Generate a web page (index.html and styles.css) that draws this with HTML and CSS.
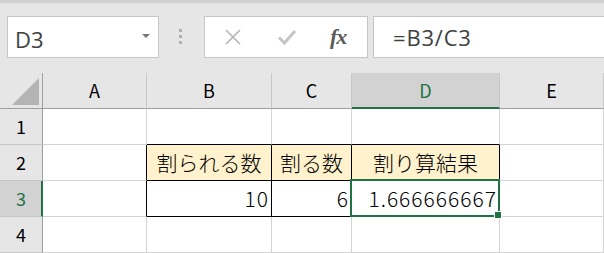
FILE: index.html
```html
<!doctype html>
<html>
<head>
	<meta charset="utf-8">
	<title>割り算</title>
	<link rel="stylesheet" href="styles.css">
</head>

<body>
	<div class="toolbar">
		<div class="namebox">
			<span class="name">D3</span>
			<span class="drop"></span>
		</div>
		<div class="grip"><i></i><i></i><i></i></div>
		<div class="buttons">
			<svg class="btn" width="20" height="16" viewBox="0 0 20 16">
				<path d="M3 1 L17 15 M17 1 L3 15" stroke="#b4b4b4" stroke-width="1.6" fill="none"/>
			</svg>
			<svg class="btn" width="20" height="16" viewBox="0 0 20 16">
				<path d="M2 8.5 L7.5 14 L18 2" stroke="#c4c4c4" stroke-width="3" fill="none"/>
			</svg>
			<span class="fx">fx</span>
		</div>
		<div class="formula">=B3/C3</div>
	</div>

	<div class="sheet">
		<div class="corner"><span class="tri"></span></div>
		<div class="colhead">A</div>
		<div class="colhead">B</div>
		<div class="colhead">C</div>
		<div class="colhead active">D</div>
		<div class="colhead">E</div>

		<div class="rowhead">1</div>
		<div class="cell"></div>
		<div class="cell bb"></div>
		<div class="cell bb"></div>
		<div class="cell bb"></div>
		<div class="cell"></div>

		<div class="rowhead">2</div>
		<div class="cell br"></div>
		<div class="cell box head">割られる数</div>
		<div class="cell box head">割る数</div>
		<div class="cell box head">割り算結果</div>
		<div class="cell"></div>

		<div class="rowhead active">3</div>
		<div class="cell br"></div>
		<div class="cell box num">10</div>
		<div class="cell box num">6</div>
		<div class="cell box num selected">1.666666667<span class="frame"></span><span class="handle"></span></div>
		<div class="cell"></div>

		<div class="rowhead">4</div>
		<div class="cell"></div>
		<div class="cell"></div>
		<div class="cell"></div>
		<div class="cell"></div>
		<div class="cell"></div>
	</div>
</body>
</html>
```

FILE: styles.css
```css
html, body {
	margin: 0;
	padding: 0;
}
body {
	width: 604px;
	height: 253px;
	overflow: hidden;
	background: #e6e6e6;
	font-family: "Noto Sans CJK JP", "Noto Sans", sans-serif;
}

/* formula bar */
.toolbar {
	display: flex;
	align-items: flex-start;
	height: 73px;
	box-sizing: border-box;
	padding: 16px 0 0 7px;
	background: linear-gradient(#d0d0d0 0, #d0d0d0 2px, #e6e6e6 4px);
}
.toolbar > * {
	flex-shrink: 0;
}
.namebox {
	display: flex;
	align-items: center;
	justify-content: space-between;
	width: 152px;
	height: 42px;
	box-sizing: border-box;
	border: 1px solid #c6c6c6;
	background: #fff;
	padding: 0 8px 0 7px;
}
.name {
	font-family: "Open Sans", "Liberation Sans", sans-serif;
	font-size: 22px;
	color: #404040;
	padding-top: 3px;
}
.drop {
	width: 0;
	height: 0;
	border-left: 4px solid transparent;
	border-right: 4px solid transparent;
	border-top: 4px solid #777;
	margin-top: -3px;
}
.grip {
	display: flex;
	flex-direction: column;
	gap: 3px;
	margin: 13px 0 0 20px;
}
.grip i {
	display: block;
	width: 3px;
	height: 3px;
	background: #b0b0b0;
}
.buttons {
	display: flex;
	align-items: center;
	width: 164px;
	height: 42px;
	box-sizing: border-box;
	margin-left: 22px;
	border: 1px solid #c6c6c6;
	background: #fff;
	padding-left: 18px;
}
.btn {
	margin-right: 34px;
}
.buttons .btn + .btn {
	margin-right: 33px;
}
.fx {
	font-family: "Liberation Serif", "DejaVu Serif", serif;
	font-style: italic;
	font-weight: bold;
	font-size: 22px;
	color: #5a5a5a;
	letter-spacing: -1px;
}
.formula {
	width: 260px;
	height: 42px;
	box-sizing: border-box;
	margin-left: 5px;
	border: 1px solid #c6c6c6;
	border-right: none;
	background: #fff;
	padding: 5px 0 0 19px;
	font-family: "Open Sans", "Liberation Sans", sans-serif;
	font-size: 22px;
	color: #404040;
	letter-spacing: 0.8px;
}

/* sheet */
.sheet {
	display: grid;
	grid-template-columns: 43px 104px 125px 80px 148px 104px;
	grid-auto-rows: 36px;
}
.sheet > div {
	box-sizing: border-box;
	border-right: 1px solid #d4d4d4;
	border-bottom: 1px solid #d4d4d4;
	line-height: 35px;
}
.corner {
	position: relative;
	border-right-color: #9e9e9e !important;
	border-bottom-color: #9e9e9e !important;
}
.tri {
	position: absolute;
	right: 3px;
	bottom: 3px;
	width: 0;
	height: 0;
	border-left: 27px solid transparent;
	border-bottom: 27px solid #b4b4b4;
}
.colhead {
	text-align: center;
	font-size: 18px;
	color: #000;
	border-right-color: #c8c8c8 !important;
	border-bottom-color: #9e9e9e !important;
}
.colhead.active {
	background: #d2d2d2;
	color: #217346;
	border-bottom: 2px solid #217346 !important;
	line-height: 34px;
}
.rowhead {
	text-align: center;
	font-size: 18px;
	color: #000;
	border-right-color: #9e9e9e !important;
	border-bottom-color: #c8c8c8 !important;
}
.rowhead.active {
	background: #d2d2d2;
	color: #217346;
	border-right: 2px solid #217346 !important;
	padding-left: 1px;
}
.cell {
	background: #fff;
	font-size: 21px;
	font-weight: 300;
	color: #000;
	white-space: nowrap;
}
.bb {
	border-bottom-color: #000 !important;
}
.br {
	border-right-color: #000 !important;
}
.box {
	border-right-color: #000 !important;
	border-bottom-color: #000 !important;
}
.head {
	background: #fff2cc;
	text-align: center;
}
.num {
	text-align: right;
	padding-right: 2px;
	letter-spacing: 1px;
}
.selected {
	position: relative;
}
.frame {
	position: absolute;
	left: -2px;
	top: -2px;
	right: -1px;
	bottom: -1px;
	border: 2px solid #217346;
}
.handle {
	position: absolute;
	right: -3px;
	bottom: -3px;
	width: 6px;
	height: 6px;
	background: #217346;
	border: 1px solid #fff;
}
```
